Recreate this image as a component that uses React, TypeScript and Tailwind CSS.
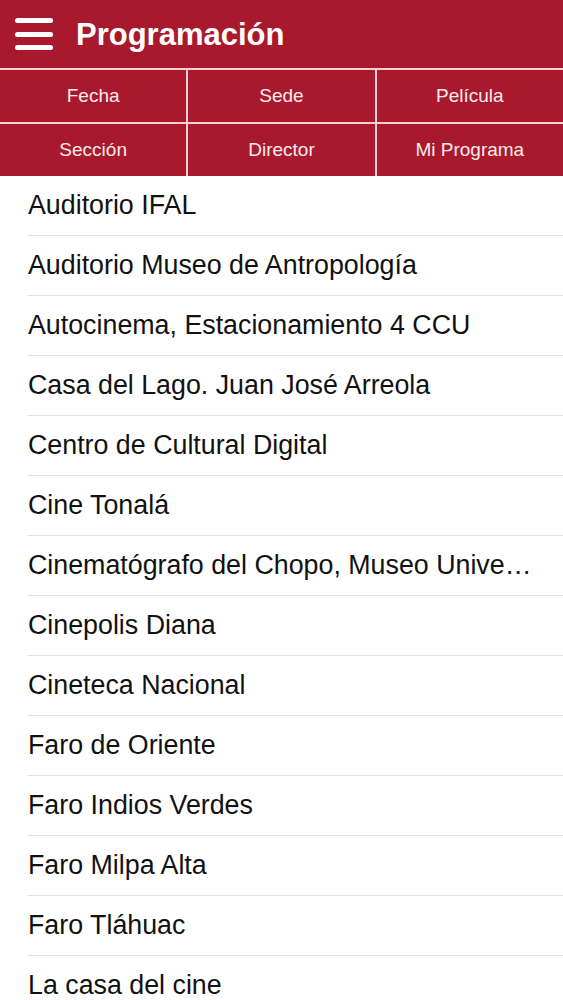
import React from "react";

const tabs = ["Fecha", "Sede", "Película", "Sección", "Director", "Mi Programa"];
const venues = [
  "Auditorio IFAL",
  "Auditorio Museo de Antropología",
  "Autocinema, Estacionamiento 4 CCU",
  "Casa del Lago. Juan José Arreola",
  "Centro de Cultural Digital",
  "Cine Tonalá",
  "Cinematógrafo del Chopo, Museo Unive…",
  "Cinepolis Diana",
  "Cineteca Nacional",
  "Faro de Oriente",
  "Faro Indios Verdes",
  "Faro Milpa Alta",
  "Faro Tláhuac",
  "La casa del cine",
];

export default function App() {
  return (
    <div
      className="w-[563px] h-[1000px] overflow-hidden bg-white"
      style={{ fontFamily: '"Liberation Sans", Arial, sans-serif' }}
    >
      <header className="h-[68px] bg-[#a9192e] flex items-center">
        <div className="ml-[15px] w-[38px] flex flex-col gap-[8.5px]">
          <span className="block h-[5px] rounded-full bg-white" />
          <span className="block h-[5px] rounded-full bg-white" />
          <span className="block h-[5px] rounded-full bg-white" />
        </div>
        <h1 className="ml-[23px] text-[31px] font-bold text-white leading-none">
          Programación
        </h1>
      </header>
      <div className="grid grid-cols-3 gap-[2px] bg-[#f1cfd4] pt-[2px]">
        {tabs.map((t) => (
          <div
            key={t}
            className="h-[52px] bg-[#a9192e] flex items-center justify-center text-[19px] text-[#fbeaec]"
          >
            {t}
          </div>
        ))}
      </div>
      <ul>
        {venues.map((v) => (
          <li key={v} className="pl-[28px]">
            <div className="h-[60px] flex items-center border-b border-[#e3e3e5]">
              <span className="text-[26.8px] text-[#111] whitespace-nowrap">{v}</span>
            </div>
          </li>
        ))}
      </ul>
    </div>
  );
}
